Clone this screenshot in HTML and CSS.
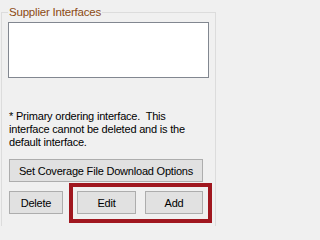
FILE: index.html
```html
<!DOCTYPE html>
<html>
<head>
<meta charset="utf-8">
<link rel="stylesheet" href="styles.css">
</head>
<body>
<fieldset class="group">
  <legend class="group-title">Supplier Interfaces</legend>
  <div class="listbox"></div>
  <p class="note">* Primary ordering interface.&nbsp; This interface cannot be deleted and is the default interface.</p>
  <button class="btn btn-wide">Set Coverage File Download Options</button>
  <div class="row">
    <button class="btn btn-delete">Delete</button>
    <div class="highlight">
      <button class="btn btn-edit">Edit</button>
      <button class="btn btn-add">Add</button>
    </div>
  </div>
</fieldset>
</body>
</html>
```
FILE: styles.css
```css
html, body {
  margin: 0;
  padding: 0;
  background: #f0f0f0;
  overflow: hidden;
}
body {
  font-family: "Liberation Sans", Arial, sans-serif;
  font-size: 11px;
  letter-spacing: -0.2px;
  color: #000;
}
.group {
  box-sizing: border-box;
  width: 215px;
  margin: 5px 0 0 1px;
  padding: 2px 6px 3px 6px;
  border: 1px solid #dcdcdc;
  border-bottom: none;
  min-inline-size: 0;
}
.group-title {
  padding: 0 1px;
  margin: 0;
  font-size: 11.5px;
  line-height: 15px;
  color: #8c4a12;
}
.listbox {
  box-sizing: border-box;
  width: 201px;
  height: 56px;
  background: #fff;
  border: 1px solid #828790;
}
.note {
  margin: 32px 0 0 1px;
  line-height: 13px;
  width: 182px;
}
.btn {
  box-sizing: border-box;
  display: block;
  height: 23px;
  padding: 0;
  margin: 0;
  border: 1px solid #adadad;
  background: #e1e1e1;
  font-family: "Liberation Sans", Arial, sans-serif;
  font-size: 11px;
  letter-spacing: -0.2px;
  color: #000;
}
.btn-wide {
  width: 194px;
  margin: 10px 0 0 1px;
}
.row {
  display: flex;
  align-items: flex-start;
  margin-top: 1px;
  margin-left: 1px;
}
.btn-delete {
  width: 54px;
  margin-top: 8px;
  flex: none;
}
.highlight {
  flex: none;
  display: flex;
  gap: 9px;
  margin-left: 6px;
  padding: 4px 5px 5px 4px;
  border: 4px solid #a0171f;
}
.btn-edit {
  width: 59px;
}
.btn-add {
  width: 58px;
}
```
